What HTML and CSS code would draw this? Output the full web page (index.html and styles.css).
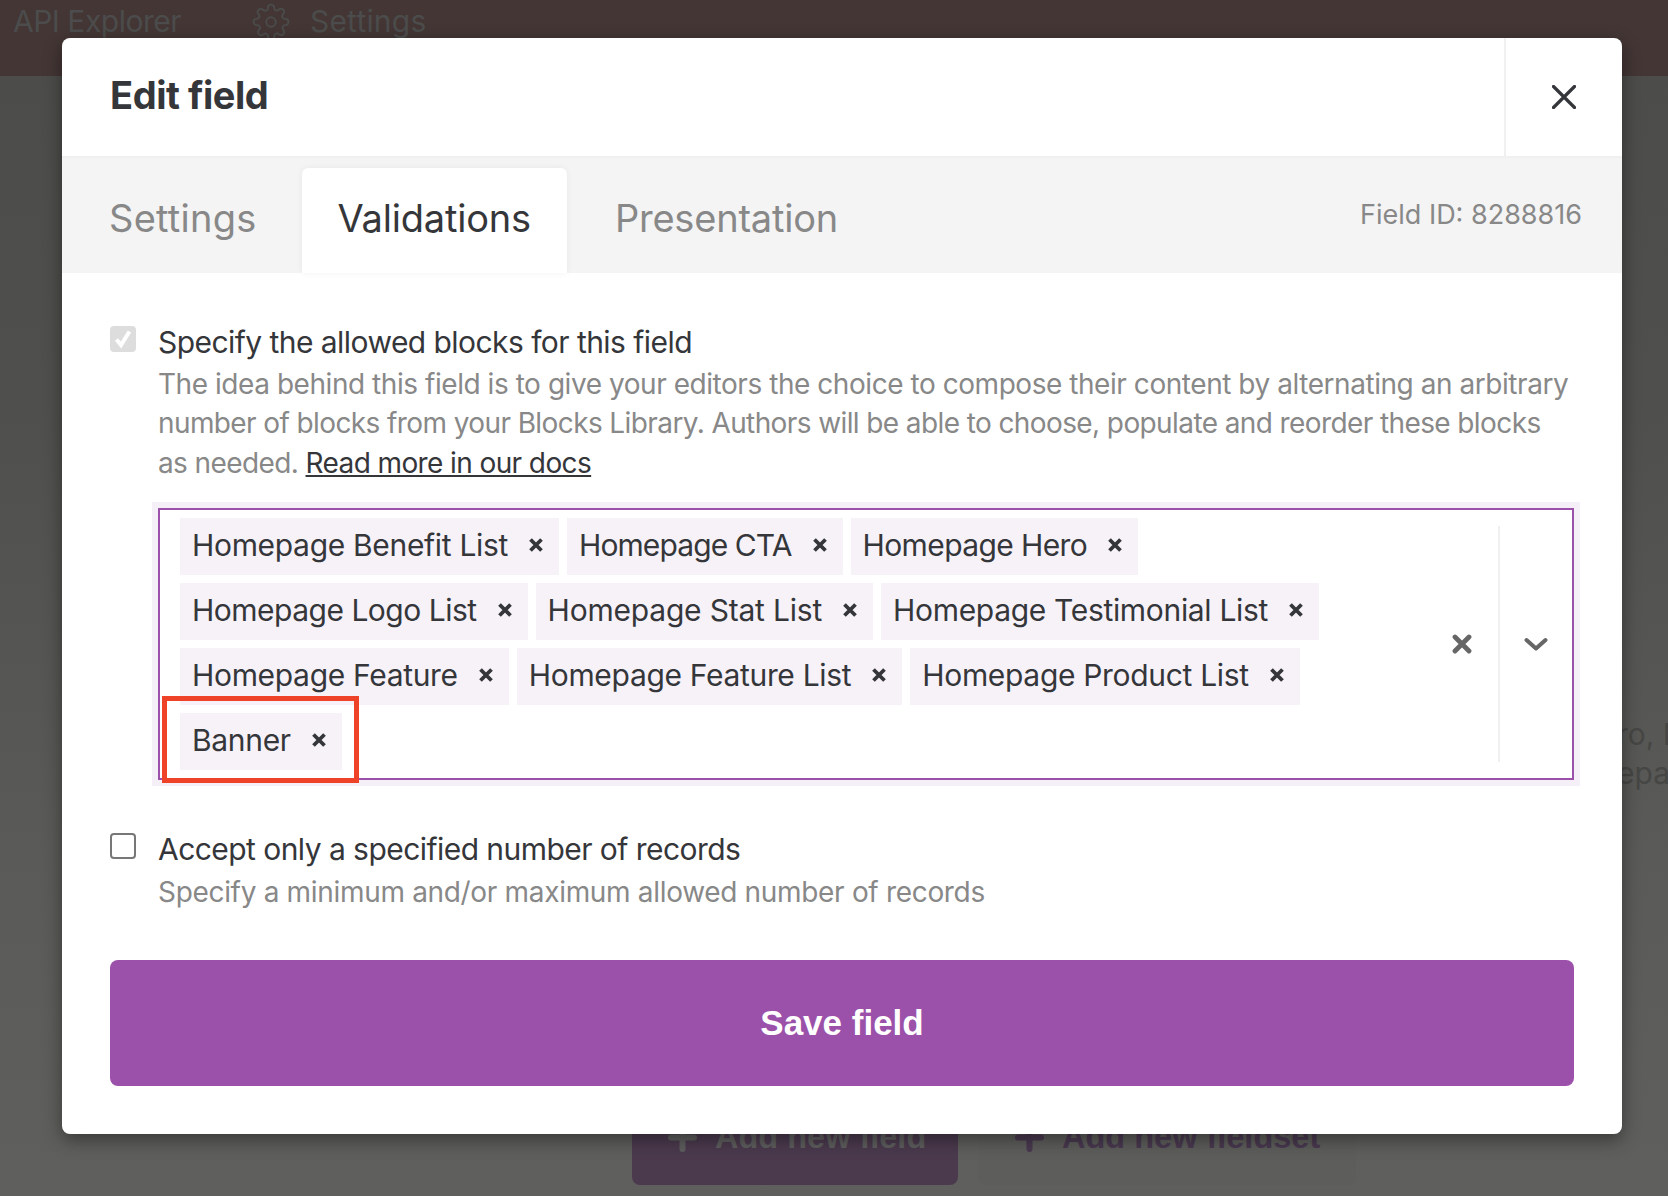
FILE: index.html
```html
<!DOCTYPE html>
<html lang="en">
<head>
<meta charset="utf-8">
<title>Edit field</title>
<link rel="stylesheet" href="styles.css">
</head>
<body>
<div class="app">
  <header class="topbar">
    <span class="topbar-link topbar-api">API Explorer</span>
    <svg class="gear" viewBox="0 0 24 24" fill="none" stroke="#4a4b4a" stroke-width="1.2"><circle cx="12" cy="12" r="3"/><path d="M19.4 15a1.65 1.65 0 0 0 .33 1.82l.06.06a2 2 0 1 1-2.83 2.83l-.06-.06a1.65 1.65 0 0 0-2.82 1.17V21a2 2 0 0 1-4 0v-.09a1.65 1.65 0 0 0-2.82-1.17l-.06.06a2 2 0 1 1-2.83-2.83l.06-.06A1.65 1.65 0 0 0 3.26 14H3a2 2 0 0 1 0-4h.09a1.65 1.65 0 0 0 1.17-2.82l-.06-.06a2 2 0 1 1 2.83-2.83l.06.06A1.65 1.65 0 0 0 10 3.09V3a2 2 0 0 1 4 0v.09a1.65 1.65 0 0 0 2.82 1.17l.06-.06a2 2 0 1 1 2.83 2.83l-.06.06A1.65 1.65 0 0 0 20.91 10H21a2 2 0 0 1 0 4h-.09a1.65 1.65 0 0 0-1.51 1z"/></svg>
    <span class="topbar-link topbar-settings">Settings</span>
  </header>
  <main class="backdrop">
    <div class="peek-text">
      <span>ro, Homepage</span>
      <span>epage List</span>
    </div>
    <div class="back-actions">
      <button class="back-btn back-primary"><svg class="plus" viewBox="0 0 29 29"><path d="M3 14.5H26M14.5 3V26"/></svg>Add new field</button>
      <button class="back-btn back-secondary"><svg class="plus" viewBox="0 0 29 29"><path d="M3 14.5H26M14.5 3V26"/></svg>Add new fieldset</button>
    </div>
  </main>
</div>

<section class="modal">
  <div class="modal-head">
    <h1 class="modal-title">Edit field</h1>
    <button class="modal-close" aria-label="Close">
      <svg viewBox="0 0 24 24" class="close-icon"><path d="M1.5 1.5 22.5 22.5M22.5 1.5 1.5 22.5"/></svg>
    </button>
  </div>
  <div class="tabbar">
    <nav class="tabs">
      <span class="tab tab-settings">Settings</span>
      <span class="tab tab-active">Validations</span>
      <span class="tab">Presentation</span>
    </nav>
    <span class="field-id">Field ID: 8288816</span>
  </div>
  <div class="modal-body">
    <div class="option">
      <span class="check check-on">
        <svg viewBox="0 0 26 26" class="check-mark"><path d="M6.5 13.5 11 19 19.5 5.5"/></svg>
      </span>
      <div class="option-text">
        <div class="option-title">Specify the allowed blocks for this field</div>
        <p class="option-desc option-desc-long">The idea behind this field is to give your editors the choice to compose their content by alternating an arbitrary <span class="desc-tight">number of blocks from your Blocks Library. Authors will be able to choose, populate and reorder these blocks as needed. <a class="doc-link" href="#">Read more in our docs</a></span></p>
      </div>
    </div>

    <div class="select">
      <div class="values">
        <span class="tag">Homepage Benefit List<svg class="tag-x" viewBox="0 0 16 16"><path d="M2.5 2.5 13.5 13.5M13.5 2.5 2.5 13.5"/></svg></span>
        <span class="tag tag-cta">Homepage CTA<svg class="tag-x" viewBox="0 0 16 16"><path d="M2.5 2.5 13.5 13.5M13.5 2.5 2.5 13.5"/></svg></span>
        <span class="tag tag-hero">Homepage Hero<svg class="tag-x" viewBox="0 0 16 16"><path d="M2.5 2.5 13.5 13.5M13.5 2.5 2.5 13.5"/></svg></span>
        <span class="tag tag-logo">Homepage Logo List<svg class="tag-x" viewBox="0 0 16 16"><path d="M2.5 2.5 13.5 13.5M13.5 2.5 2.5 13.5"/></svg></span>
        <span class="tag tag-stat">Homepage Stat List<svg class="tag-x" viewBox="0 0 16 16"><path d="M2.5 2.5 13.5 13.5M13.5 2.5 2.5 13.5"/></svg></span>
        <span class="tag">Homepage Testimonial List<svg class="tag-x" viewBox="0 0 16 16"><path d="M2.5 2.5 13.5 13.5M13.5 2.5 2.5 13.5"/></svg></span>
        <span class="tag">Homepage Feature<svg class="tag-x" viewBox="0 0 16 16"><path d="M2.5 2.5 13.5 13.5M13.5 2.5 2.5 13.5"/></svg></span>
        <span class="tag">Homepage Feature List<svg class="tag-x" viewBox="0 0 16 16"><path d="M2.5 2.5 13.5 13.5M13.5 2.5 2.5 13.5"/></svg></span>
        <span class="tag">Homepage Product List<svg class="tag-x" viewBox="0 0 16 16"><path d="M2.5 2.5 13.5 13.5M13.5 2.5 2.5 13.5"/></svg></span>
        <span class="tag">Banner<svg class="tag-x" viewBox="0 0 16 16"><path d="M2.5 2.5 13.5 13.5M13.5 2.5 2.5 13.5"/></svg></span>
      </div>
      <div class="indicator">
        <svg class="clear-icon" viewBox="0 0 20 20"><path d="M3 3 17 17M17 3 3 17"/></svg>
      </div>
      <span class="indicator-sep"></span>
      <div class="indicator">
        <svg class="chevron-icon" viewBox="0 0 24 14"><path d="M2.5 3 12 11.5 21.5 3"/></svg>
      </div>
      <span class="highlight"></span>
    </div>

    <div class="option option-second">
      <span class="check"></span>
      <div class="option-text">
        <div class="option-title">Accept only a specified number of records</div>
        <p class="option-desc">Specify a minimum and/or maximum allowed number of records</p>
      </div>
    </div>

    <button class="save">Save field</button>
  </div>
</section>
</body>
</html>
```

FILE: styles.css
```css
* { box-sizing: border-box; }
html, body { margin: 0; height: 100%; overflow: hidden; }
body {
  font-family: Inter, "Liberation Sans", sans-serif;
  color: #35363a;
  background: #555;
}
.app { height: 1196px; display: flex; flex-direction: column; }
.topbar {
  height: 76px;
  flex: none;
  background: #433635;
  display: flex;
  align-items: flex-start;
  padding: 3px 0 0 13px;
  color: #4b4c4b;
  font-size: 30px;
  line-height: 36px;
}
.topbar-api { letter-spacing: -.5px; }
.topbar-settings { letter-spacing: .2px; }
.gear { width: 38px; height: 38px; margin: 0 20px 0 71px; }
.backdrop {
  flex: 1;
  display: flex;
  flex-direction: column;
  background: linear-gradient(#4c4c4a 0%, #4f4f4d 30%, #5a5a58 70%, #5f5f5d 100%);
}
.peek-text {
  margin-top: 639px;
  margin-left: 1622px;
  display: flex;
  flex-direction: column;
  white-space: nowrap;
  font-size: 30px;
  line-height: 39px;
  color: #464644;
  overflow: hidden;
}
.peek-text span { margin-left: -5px; }
.back-actions {
  margin-top: auto;
  padding: 0 0 11px 632px;
  display: flex;
  gap: 20px;
}
.back-btn {
  height: 70px;
  border: 0;
  border-radius: 8px;
  font: bold 32.5px/38px "Liberation Sans", sans-serif;
  display: flex;
  align-items: flex-start;
  padding: 3px 0 0;
  white-space: nowrap;
}
.back-primary { width: 326px; background: #4b3a4e; color: #5f5e5e; padding-left: 36px; }
.back-secondary { width: 378px; background: #5d5d5b; color: #4a3950; padding-left: 37px; }
.plus { width: 29px; height: 29px; flex: none; margin: 5px 18px 0 0; fill: none; stroke: currentColor; stroke-width: 6; stroke-linecap: round; }

.modal {
  position: absolute;
  left: 62px;
  top: 38px;
  width: 1560px;
  height: 1096px;
  background: #fff;
  border-radius: 8px;
  box-shadow: 0 6px 18px rgba(0, 0, 0, .4);
  display: flex;
  flex-direction: column;
  overflow: hidden;
}
.modal-head {
  height: 120px;
  flex: none;
  display: flex;
  align-items: stretch;
  justify-content: space-between;
  border-bottom: 2px solid #f0f0f0;
}
.modal-title {
  margin: 0;
  padding: 0 0 4px 48px;
  font-size: 38px;
  font-weight: 700;
  letter-spacing: -.45px;
  align-self: center;
}
.modal-close {
  width: 118px;
  border: 0;
  border-left: 2px solid #f0f0f0;
  background: none;
  padding: 0;
  display: flex;
  align-items: center;
  justify-content: center;
}
.close-icon { width: 24px; height: 24px; fill: none; stroke: #35363a; stroke-width: 3.2; stroke-linecap: round; }
.tabbar {
  height: 115px;
  flex: none;
  background: #f4f4f4;
  display: flex;
  justify-content: space-between;
  padding: 10px 40px 0 12px;
}
.tabs { display: flex; gap: 13px; }
.tab {
  padding: 0 35px;
  font-size: 38px;
  letter-spacing: -.2px;
  line-height: 101px;
  color: #888;
  white-space: nowrap;
}
.tab-settings { letter-spacing: .25px; padding-right: 32px; }
.tab-active {
  padding: 0 36px;
  background: #fff;
  color: #35363a;
  border-radius: 6px 6px 0 0;
  box-shadow: 0 0 6px rgba(0, 0, 0, .06);
}
.field-id { font-size: 27px; line-height: 94px; color: #888; }
.modal-body {
  flex: 1;
  padding: 48px 48px 0;
  display: flex;
  flex-direction: column;
}
.option { display: flex; gap: 22px; align-items: flex-start; }
.option-second { margin-top: 48px; }
.option-second .option-desc { margin-top: 3px; }
.check {
  width: 26px;
  height: 26px;
  flex: none;
  margin-top: 5px;
  border: 2px solid #777;
  border-radius: 4px;
  background: #fff;
}
.check-on { background: #ddd; border: 0; }
.check-mark { display: block; fill: none; stroke: #fff; stroke-width: 4; }
.option-text { flex: 1; }
.option-title { font-size: 30px; line-height: 42px; letter-spacing: -.55px; }
.option-desc { margin: 2px 0 0; font-size: 28px; line-height: 39.3px; letter-spacing: -.32px; color: #888; }
.option-desc-long { letter-spacing: -.45px; }
.desc-tight { letter-spacing: -.6px; }
.doc-link { color: #35363a; }
.select {
  position: relative;
  margin: 25px 0 0 48px;
  border: 2px solid #9b51aa;
  box-shadow: 0 0 0 6px #f5eff8;
  display: flex;
  align-items: center;
}
.values {
  flex: 1;
  padding: 8px 0 8px 20px;
  display: flex;
  flex-wrap: wrap;
  gap: 8px;
}
.tag {
  height: 57px;
  background: #f6f2f8;
  padding: 0 0 2px 12px;
  display: flex;
  align-items: center;
  font-size: 30px;
  letter-spacing: -.32px;
  white-space: nowrap;
}
.tag-cta { letter-spacing: -.9px; }
.tag-hero { letter-spacing: -.6px; }
.tag-logo { letter-spacing: -.5px; }
.tag-stat { letter-spacing: -.2px; }
.tag-x { width: 16px; height: 16px; margin: 0 15px 0 20px; fill: none; stroke: #35363a; stroke-width: 3.8; }
.indicator { width: 72px; display: flex; justify-content: center; flex: none; }
.indicator-sep { width: 2px; align-self: stretch; margin: 16px 0; background: #f0f0f0; flex: none; }
.clear-icon { width: 20px; height: 20px; fill: none; stroke: #666; stroke-width: 4.8; stroke-linecap: round; }
.chevron-icon { width: 24px; height: 14px; fill: none; stroke: #666; stroke-width: 4; stroke-linecap: round; stroke-linejoin: round; }
.highlight {
  position: absolute;
  left: 2px;
  top: 186px;
  width: 197px;
  height: 87px;
  border: 5px solid #ee4328;
}
.save {
  margin-top: 48px;
  height: 126px;
  border: 0;
  border-radius: 8px;
  background: #9b51aa;
  color: #fff;
  font: bold 35px "Liberation Sans", sans-serif;
}
```
